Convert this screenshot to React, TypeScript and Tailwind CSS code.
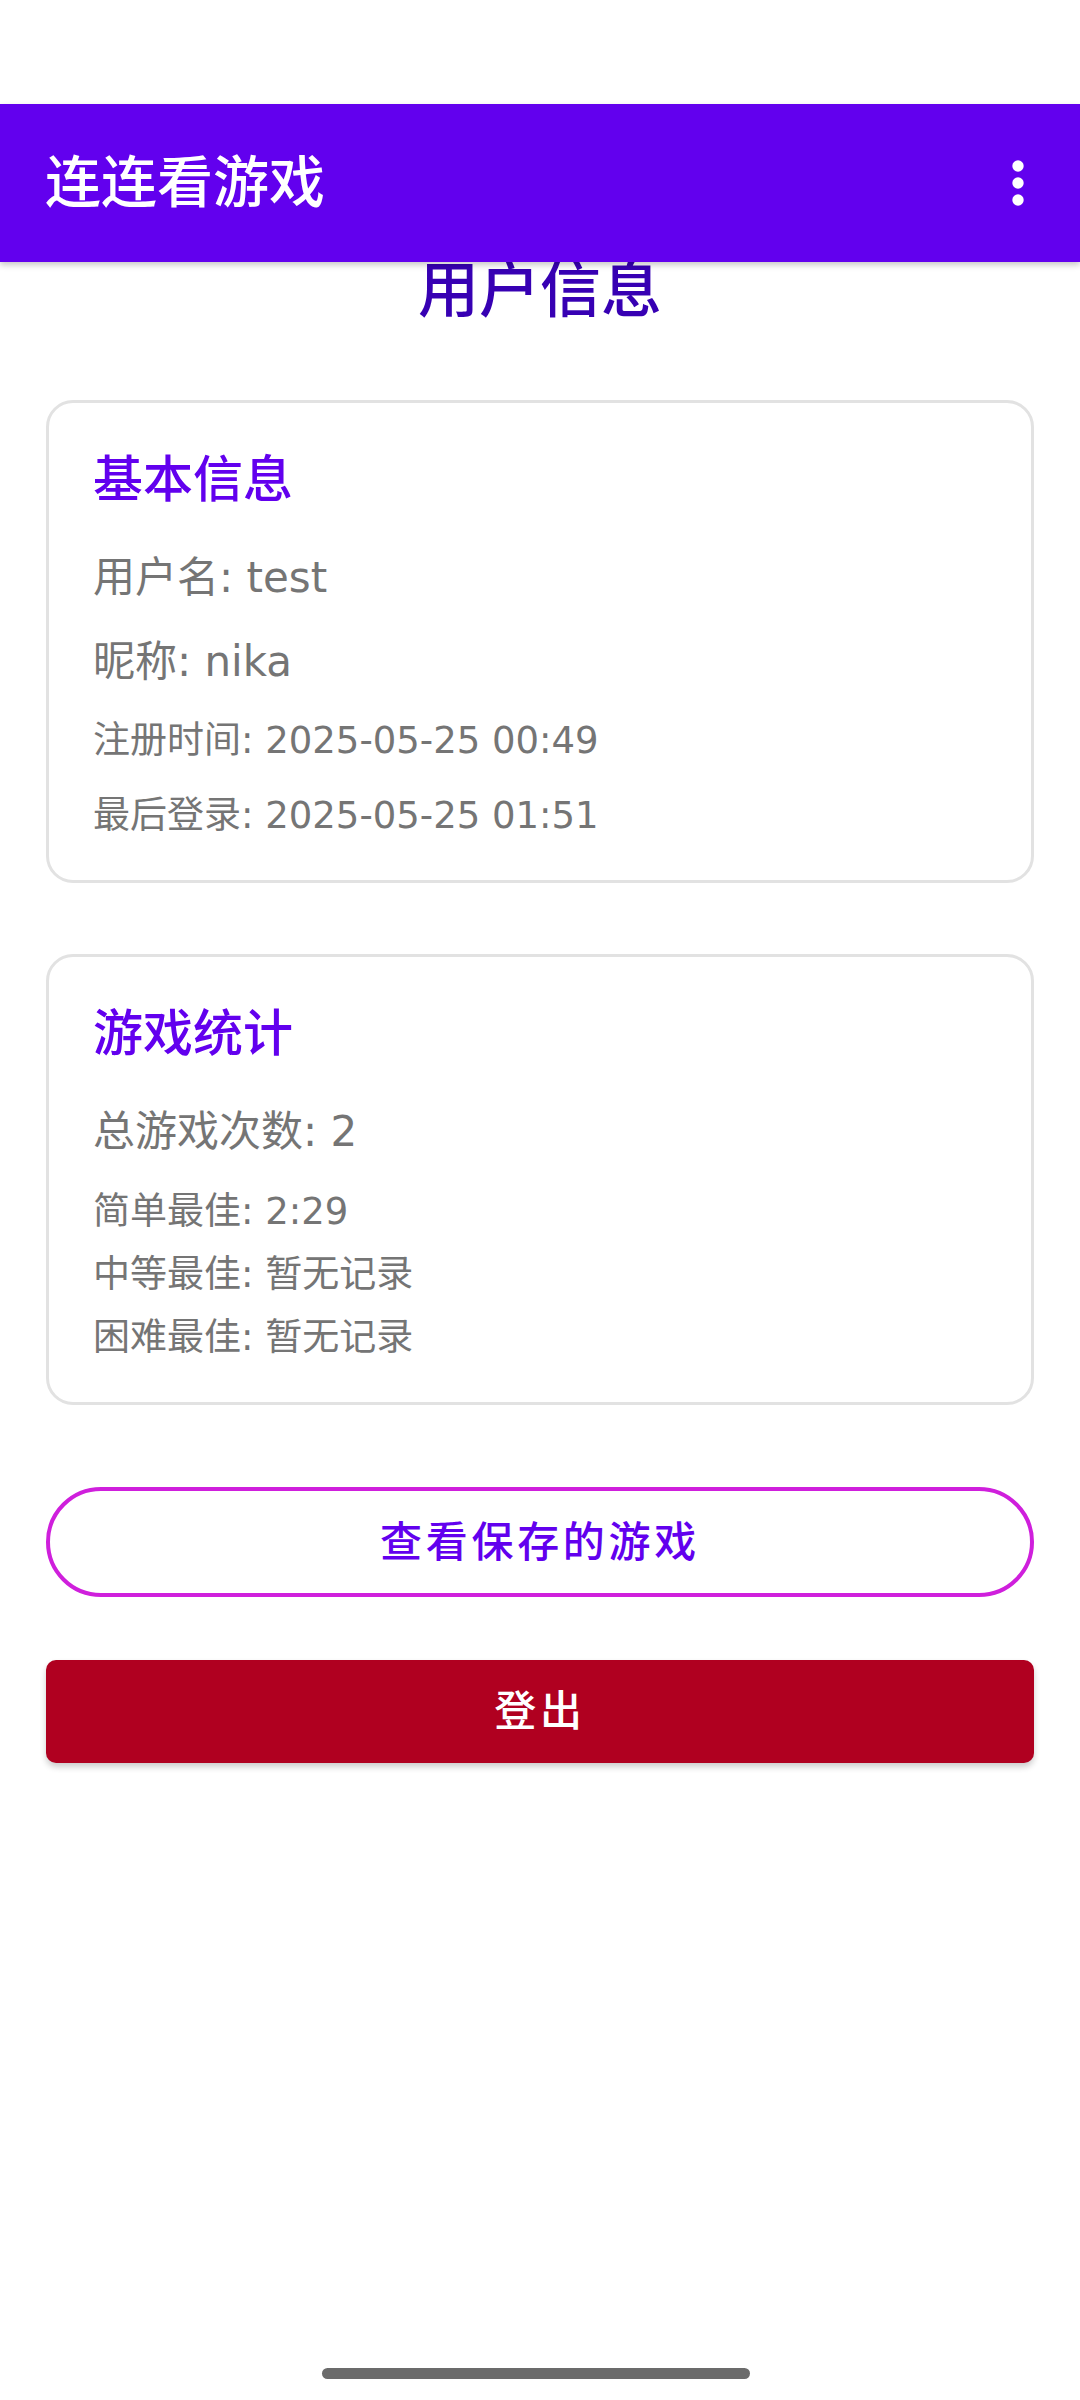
import React from "react";

const font = { fontFamily: '"DejaVu Sans", "Noto Sans CJK SC", sans-serif' };

function MoreIcon() {
  return (
    <svg width="24" height="60" viewBox="0 0 24 60" className="block">
      <circle cx="12" cy="13" r="5.7" fill="#ffffff" />
      <circle cx="12" cy="30" r="5.7" fill="#ffffff" />
      <circle cx="12" cy="47" r="5.7" fill="#ffffff" />
    </svg>
  );
}

export default function App() {
  return (
    <div className="relative w-[1080px] h-[2400px] bg-white overflow-hidden" style={font}>
      {/* status bar space */}
      <div className="h-[104px]" />

      {/* App bar */}
      <div className="relative z-10 h-[158px] bg-[#6200EE] flex items-center justify-between pl-[45px] pr-[50px] shadow-[0_3px_6px_rgba(0,0,0,0.22)]">
        <span className="text-[56px] leading-none font-medium text-white">连连看游戏</span>
        <MoreIcon />
      </div>

      <h1 className="relative z-0 mt-[-1px] text-center text-[61px] leading-[60px] font-medium text-[#3700B3]">用户信息</h1>

      <div className="px-[46px] pt-[79px]">
        {/* Basic info */}
        <div className="rounded-[27px] border-[3px] border-[#e2e2e2] px-[44px] pt-[52px] pb-[26px]">
          <div className="text-[50px] leading-[50px] font-medium text-[#6200EE]">基本信息</div>
          <div className="mt-[31px] text-[42px] leading-[84px] text-[#757575]">用户名: test</div>
          <div className="text-[42px] leading-[83px] text-[#757575]">昵称: nika</div>
          <div className="text-[37px] leading-[75px] text-[#757575]">注册时间: 2025-05-25 00:49</div>
          <div className="text-[37px] leading-[76px] text-[#757575]">最后登录: 2025-05-25 01:51</div>
        </div>

        {/* Game stats */}
        <div className="mt-[71px] rounded-[27px] border-[3px] border-[#e2e2e2] px-[44px] pt-[52px] pb-[33px]">
          <div className="text-[50px] leading-[50px] font-medium text-[#6200EE]">游戏统计</div>
          <div className="mt-[31px] text-[42px] leading-[84px] text-[#757575]">总游戏次数: 2</div>
          <div className="mt-[6px] text-[37px] leading-[63px] text-[#757575]">简单最佳: 2:29</div>
          <div className="text-[37px] leading-[63px] text-[#757575]">中等最佳: 暂无记录</div>
          <div className="text-[37px] leading-[63px] text-[#757575]">困难最佳: 暂无记录</div>
        </div>

        <button className="mt-[82px] w-full h-[110px] rounded-full border-[4px] border-[#cf1fdc] bg-white flex items-center justify-center text-[42px] tracking-[3.7px] font-medium text-[#6200EE]">
          查看保存的游戏
        </button>

        <button className="mt-[63px] w-full h-[103px] rounded-[10px] bg-[#B00020] flex items-center justify-center text-[42px] tracking-[3.7px] font-medium text-white shadow-[0_4px_6px_rgba(0,0,0,0.2)]">
          登出
        </button>
      </div>

      {/* gesture bar */}
      <div className="absolute left-[322px] top-[2368px] w-[428px] h-[11px] rounded-full bg-[#6b6b6b]" />
    </div>
  );
}
